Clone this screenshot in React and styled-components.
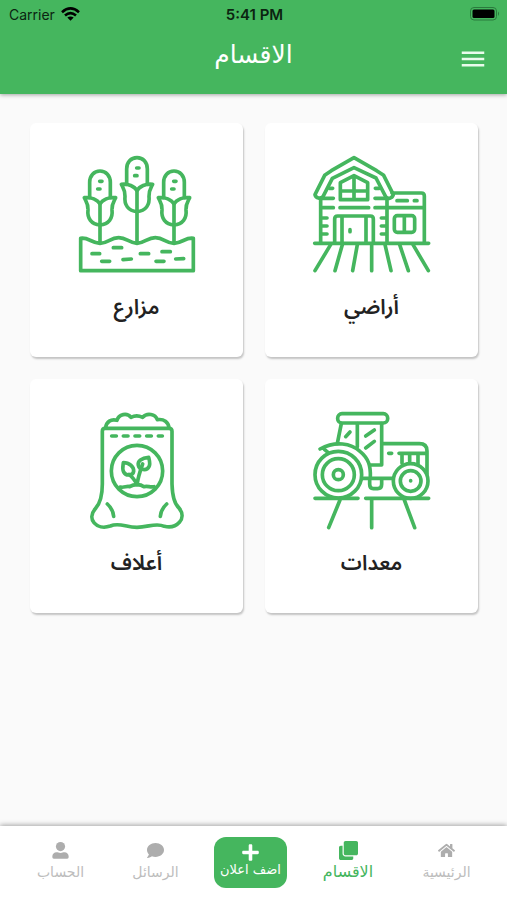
import React from "react";
import styled, { createGlobalStyle } from "styled-components";
import { FaHome, FaClone, FaPlus, FaComment } from "react-icons/fa";
import { MdMenu } from "react-icons/md";

const green = "#45b65e";

const GlobalStyle = createGlobalStyle`
  *, *::before, *::after { box-sizing: border-box; }
  body { margin: 0; background: #fafafa; }
  button, a { font: inherit; color: inherit; }
`;

const Screen = styled.div`
  min-height: 100vh;
  display: flex;
  flex-direction: column;
  font-family: "DejaVu Sans", sans-serif;
`;

const Header = styled.header`
  background: ${green};
  box-shadow: 0 1px 4px rgba(0, 0, 0, 0.35);
  padding-bottom: 16px;
`;

const StatusBar = styled.div`
  direction: ltr;
  display: grid;
  grid-template-columns: 1fr auto 1fr;
  align-items: center;
  height: 28px;
  padding: 0 7px 0 9px;
  font-family: Inter, sans-serif;
  font-size: 14px;
  color: #0b2411;
`;

const Carrier = styled.div`
  display: flex;
  align-items: center;
  gap: 6px;
`;

const Clock = styled.time`
  font-size: 15px;
  font-weight: 600;
`;

const Battery = styled.svg`
  justify-self: end;
`;

const TitleBar = styled.div`
  display: grid;
  grid-template-columns: 30px 1fr 30px;
  align-items: center;
  height: 50px;
  padding: 0 19px;
  color: #fff;
`;

const MenuButton = styled.button`
  display: flex;
  padding: 12px 0 0;
  border: 0;
  background: none;
  font-size: 30px;
  color: #e9fbec;
`;

const Title = styled.h1`
  margin: 0;
  text-align: center;
  font-size: 25px;
  font-weight: 400;
  line-height: 32px;
  padding-top: 4px;
`;

const Sections = styled.main`
  flex: 1;
  display: grid;
  grid-template-columns: 1fr 1fr;
  align-content: start;
  gap: 22px;
  padding: 29px 29px 29px 30px;
`;

const Card = styled.a`
  display: flex;
  flex-direction: column;
  align-items: center;
  gap: 14px;
  padding: 30px 12px 32px;
  border-radius: 6px;
  background: #fff;
  box-shadow: 1px 2px 2px rgba(0, 0, 0, 0.22);
  text-decoration: none;
`;

const Label = styled.span`
  font-family: "Noto Sans Arabic", "DejaVu Sans", sans-serif;
  font-size: 21px;
  font-weight: 600;
  line-height: 36px;
  color: #222;
`;

const Drawing = styled.svg`
  width: 120px;
  height: 122px;
  fill: none;
  stroke: ${green};
  stroke-width: 11;
  stroke-linecap: round;
  stroke-linejoin: round;
`;

const Nav = styled.nav`
  position: sticky;
  bottom: 0;
  display: grid;
  grid-template-columns: 97fr 100fr 95fr 95fr 95fr;
  align-items: start;
  height: 74px;
  padding: 11px 12px 0 13px;
  background: #fff;
  box-shadow: 0 -1px 5px rgba(0, 0, 0, 0.35);
`;

const NavLink = styled.a`
  display: flex;
  flex-direction: column;
  align-items: center;
  gap: 2px;
  padding-top: 4px;
  text-decoration: none;
  font-size: ${(p) => (p.$active ? 16 : 14)}px;
  line-height: 20px;
  color: ${(p) => (p.$active ? green : "#bdbdbd")};
`;

const NavIcon = styled.span`
  display: flex;
  align-items: center;
  height: 19px;
  font-size: ${(p) => (p.$active ? 19 : 17)}px;
  color: ${(p) => (p.$active ? green : "#adadad")};
`;

const AddButton = styled.button`
  justify-self: center;
  display: flex;
  flex-direction: column;
  align-items: center;
  width: 73px;
  height: 51px;
  padding: 6px 0 0;
  border: 0;
  border-radius: 12px;
  background: ${green};
  color: #fff;
  font-size: 19px;
`;

const AddText = styled.span`
  font-size: 13px;
  line-height: 16px;
  white-space: nowrap;
`;

function Picture({ children }) {
  return (
    <Drawing viewBox="20 24 360 366" aria-hidden="true">
      {children}
    </Drawing>
  );
}

function Corn({ x, y, stem }) {
  return (
    <g transform={`translate(${x} ${y})`}>
      <path d="M-31 80V34C-31 14-18 0 0 0S31 14 31 34V80" />
      <path d="M0 162C-26 160-39 142-36 116C-35 98-42 91-47 80C-27 77-7 86 0 99C7 86 27 77 47 80C42 91 35 98 36 116C39 142 26 160 0 162Z" />
      <path d={`M0 99V${stem}M-1 31H6M-7 54H0`} />
    </g>
  );
}

function FarmIcon() {
  return (
    <Picture>
      <Corn x={89} y={78} stem={215} />
      <Corn x={200} y={38} stem={255} />
      <Corn x={311} y={78} stem={215} />
      <path d="M31 280C53 276 64 294 89 295C113 294 120 278 145 278C169 278 176 294 200 295C224 294 231 278 255 278C280 278 287 294 311 295C336 294 347 276 369 280V377H31Z" />
      <path d="M65 326H88M129 308H154M94 349H118M158 344L183 342M210 326H235M257 349H281M275 320H300M316 342L340 341" />
    </Picture>
  );
}

function LandIcon() {
  return (
    <Picture>
      <path d="M146 38L214 77L235 91L264 149C260 161 248 163 241 155L212 99L146 68L81 100L53 155C45 163 32 160 29 149L58 91L78 77Z" />
      <path d="M46 160V294M245 160V294M28 295H370M260 144H348Q357 144 357 153V294M248 188H355" />
      <path d="M105 164V113L146 92L187 113V164ZM146 93V164M106 138H187" />
      <path d="M72 130H82M50 160H84M210 130H222M209 160H242M52 188H84M104 188H190M209 188H242M50 219H65M50 243H65M50 267H65M228 219H242M228 243H242M228 267H242" />
      <path d="M88 294V222Q88 213 97 213H195Q204 213 204 222V294M110 218V294M182 218V294M134 254V260" />
      <rect x="267" y="212" width="61" height="50" rx="9" />
      <path d="M297 213V261M275 167H306M327 167H335" />
      <path d="M76 299L29 377M111 299L89 377M156 299L142 377M199 299V377M239 299L257 377M283 299L309 377M323 299L369 377" />
    </Picture>
  );
}

function FeedIcon() {
  return (
    <Picture>
      <path d="M106 80C108 62 122 53 140 58C145 39 170 34 182 49C192 44 206 44 217 49C230 34 255 39 261 56C281 53 294 63 296 80" />
      <path d="M104 82H296Q305 82 305 91V249C306 283 310 307 326 321C352 353 318 385 282 376C257 364 234 379 200 379C166 379 146 363 120 375C78 389 47 354 76 322C91 305 96 282 96 249V91Q96 82 104 82Z" />
      <path d="M124 105H138M159 105H173M194 105H208M229 105H243M264 105H276" />
      <circle cx="200" cy="210" r="77" />
      <path d="M150 258C162 261 169 254 178 257C191 249 210 249 221 257C232 254 240 260 251 257" />
      <path d="M200 251C203 231 207 216 217 189M199 250C195 239 188 230 176 220" />
      <path d="M235 169C214 171 201 180 204 193C207 207 229 211 236 197C241 188 237 178 235 169Z" />
      <path d="M159 185C177 185 191 197 190 211C188 223 168 227 160 213C155 204 158 194 159 185Z" />
      <path d="M111 309Q128 324 130 346M289 309Q272 324 270 346" />
    </Picture>
  );
}

function EquipmentIcon() {
  return (
    <Picture>
      <rect x="97" y="38" width="150" height="28" rx="13" />
      <path d="M108 68L96 127M156 68V137M229 68V192H194M231 128H342Q365 128 365 150V218" />
      <path d="M134 93L121 107M207 87L181 105M207 121L181 141M250 157H259M281 157H363M290 159V187M313 159V181M338 159V190" />
      <path d="M44 144C91 119 137 127 164 151C191 173 196 197 195 227M57 145L68 154" />
      <circle cx="99" cy="221" r="70" />
      <circle cx="99" cy="221" r="48" />
      <circle cx="99" cy="221" r="15" />
      <circle cx="316" cy="240" r="52" />
      <circle cx="316" cy="240" r="31" />
      <path d="M316 239V240M171 232H260M193 234V250Q193 263 204 263H217Q229 263 229 250V234" />
      <path d="M29 292H158M181 292H370M104 297L70 380M199 296V380M297 297L328 380" />
    </Picture>
  );
}

function PersonIcon() {
  return (
    <svg width="1em" height="1em" viewBox="0 0 48 48" fill="currentColor" aria-hidden="true">
      <circle cx="24" cy="13" r="13" />
      <path d="M1 43V40C1 34 6 29 13 29C17 29 19 31 24 31S31 29 35 29C42 29 47 34 47 40V43Q47 47 43 47H5Q1 47 1 43Z" />
    </svg>
  );
}

const sections = [
  { name: "أراضي", Icon: LandIcon },
  { name: "مزارع", Icon: FarmIcon },
  { name: "معدات", Icon: EquipmentIcon },
  { name: "أعلاف", Icon: FeedIcon },
];

function NavItem({ icon: Icon, text, active }) {
  return (
    <NavLink href="#" $active={active} aria-current={active ? "page" : undefined}>
      <NavIcon $active={active}>
        <Icon />
      </NavIcon>
      {text}
    </NavLink>
  );
}

export default function App() {
  return (
    <Screen dir="rtl" lang="ar">
      <GlobalStyle />
      <Header>
        <StatusBar>
          <Carrier>
            Carrier
            <svg width="19" height="14" viewBox="0 0 19 14" aria-hidden="true">
              <g fill="none" stroke="#000" strokeWidth="2.6">
                <path d="M1 5.2Q9.500-2.400 18 5.200" />
                <path d="M4 8.500Q9.500 3.700 15 8.500" />
              </g>
              <path d="M6.300 10.600Q9.500 8.200 12.700 10.600L9.500 13.800Z" />
            </svg>
          </Carrier>
          <Clock>5:41 PM</Clock>
          <Battery width="30" height="14" viewBox="0 0 30 14" aria-hidden="true">
            <rect x="0.500" y="0.500" width="26" height="12.500" rx="3.500" fill="none" stroke="#2a7a3d" />
            <rect x="2.500" y="2.500" width="22" height="8.500" rx="1.500" />
            <path d="M28 4.500Q30 6.700 28 9Z" fill="#2a7a3d" />
          </Battery>
        </StatusBar>
        <TitleBar>
          <MenuButton aria-label="القائمة">
            <MdMenu />
          </MenuButton>
          <Title>الاقسام</Title>
        </TitleBar>
      </Header>
      <Sections>
        {sections.map(({ name, Icon }) => (
          <Card href="#" key={name}>
            <Icon />
            <Label>{name}</Label>
          </Card>
        ))}
      </Sections>
      <Nav>
        <NavItem icon={FaHome} text="الرئيسية" />
        <NavItem icon={FaClone} text="الاقسام" active />
        <AddButton>
          <FaPlus />
          <AddText>اضف اعلان</AddText>
        </AddButton>
        <NavItem icon={FaComment} text="الرسائل" />
        <NavItem icon={PersonIcon} text="الحساب" />
      </Nav>
    </Screen>
  );
}
